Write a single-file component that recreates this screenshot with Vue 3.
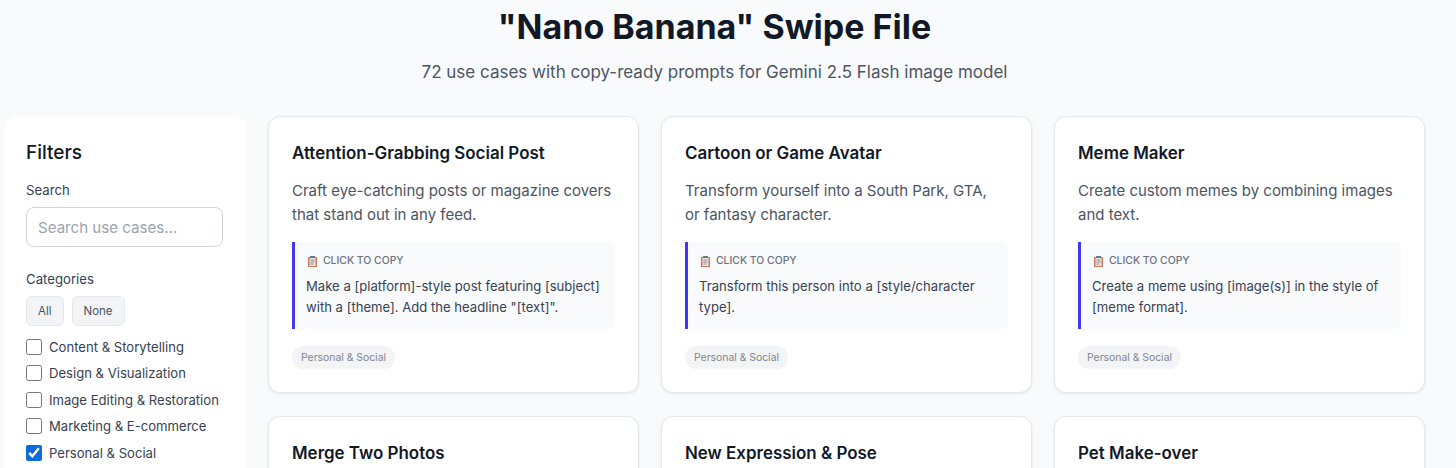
<template>
  <div class="page">
    <header class="head">
      <h1>"Nano Banana" Swipe File</h1>
      <p>72 use cases with copy-ready prompts for Gemini 2.5 Flash image model</p>
    </header>
    <div class="layout">
      <aside class="filters">
        <h2>Filters</h2>
        <label class="label" for="q">Search</label>
        <input id="q" class="search" type="text" placeholder="Search use cases..." />
        <div class="label cat-label">Categories</div>
        <div class="btns">
          <button class="mini">All</button>
          <button class="mini">None</button>
        </div>
        <label v-for="c in categories" :key="c.name" class="check">
          <input type="checkbox" :checked="c.on" />
          <span>{{ c.name }}</span>
        </label>
      </aside>
      <main class="grid">
        <article v-for="u in useCases" :key="u.title" class="card">
          <h3>{{ u.title }}</h3>
          <template v-if="u.desc">
            <p class="desc">{{ u.desc }}</p>
            <div class="prompt">
              <div class="copy">
                <svg class="clip" viewBox="0 0 9 11" width="9" height="11">
                  <rect x="0" y="1" width="9" height="10" rx="0.5" fill="#c97a58" />
                  <rect x="1.5" y="2" width="6" height="8" fill="#ede6e2" />
                  <rect x="2" y="0" width="5" height="2" fill="#6f7482" />
                  <path d="M2.5 4h4M2.5 6h4M2.5 8h3" stroke="#8a8c9a" stroke-width="1" />
                </svg>
                <span>CLICK TO COPY</span>
              </div>
              <div class="prompt-text">{{ u.prompt }}</div>
            </div>
            <span class="tag">Personal &amp; Social</span>
          </template>
        </article>
      </main>
    </div>
  </div>
</template>

<script setup>
const categories = [
  { name: 'Content & Storytelling', on: false },
  { name: 'Design & Visualization', on: false },
  { name: 'Image Editing & Restoration', on: false },
  { name: 'Marketing & E-commerce', on: false },
  { name: 'Personal & Social', on: true }
]

const useCases = [
  {
    title: 'Attention-Grabbing Social Post',
    desc: 'Craft eye-catching posts or magazine covers that stand out in any feed.',
    prompt: 'Make a [platform]-style post featuring [subject] with a [theme]. Add the headline "[text]".'
  },
  {
    title: 'Cartoon or Game Avatar',
    desc: 'Transform yourself into a South Park, GTA, or fantasy character.',
    prompt: 'Transform this person into a [style/character type].'
  },
  {
    title: 'Meme Maker',
    desc: 'Create custom memes by combining images and text.',
    prompt: 'Create a meme using [image(s)] in the style of [meme format].'
  },
  { title: 'Merge Two Photos' },
  { title: 'New Expression & Pose' },
  { title: 'Pet Make-over' }
]
</script>

<style>
html, body { overflow: hidden; background: #f9fafb; }
</style>

<style scoped>
.page {
  font-family: Inter, "Liberation Sans", sans-serif;
  background: #f9fafb;
  height: 468px;
  overflow: hidden;
}
.head { text-align: center; width: 1429px; padding-top: 7px; height: 116px; box-sizing: border-box; }
.head h1 {
  margin: 0;
  font-size: 34px;
  line-height: 40px;
  font-weight: 700;
  color: #111827;
}
.head p {
  margin: 15px 0 0;
  font-size: 17px;
  line-height: 20px;
  color: #4b5563;
}
.layout { display: flex; gap: 22px; padding: 0 31px 0 4px; align-items: flex-start; }
.filters {
  width: 242px;
  flex: none;
  box-sizing: border-box;
  background: #fff;
  border-radius: 12px;
  padding: 24px 22px;
  height: 500px;
  box-shadow: 0 1px 2px rgba(0, 0, 0, 0.02);
}
.filters h2 { margin: 0; font-size: 19px; line-height: 26px; font-weight: 500; color: #111827; }
.label { display: block; font-size: 13.2px; line-height: 20px; font-weight: 400; color: #374151; margin-top: 14px; }
.search {
  display: block;
  box-sizing: border-box;
  width: 197px;
  height: 40px;
  margin-top: 7px;
  padding: 0 11px;
  border: 1px solid #d1d5db;
  border-radius: 8px;
  font: 15.1px Inter, sans-serif;
  outline: none;
}
.search::placeholder { color: #9ca3af; }
.cat-label { margin-top: 22px; }
.btns { display: flex; gap: 8px; margin-top: 7px; margin-bottom: 7.9px; }
.mini {
  height: 30px;
  padding: 0 11px;
  border: 1px solid #e5e7eb;
  border-radius: 6px;
  background: #f3f4f6;
  font: 11.5px Inter, sans-serif;
  color: #4b5563;
}
.check {
  display: flex;
  align-items: center;
  gap: 7px;
  height: 26.4px;
  font-size: 13.1px;
  color: #374151;
}
.check input { width: 16px; height: 16px; margin: 0; accent-color: #0b6bdc; }
.grid { display: grid; grid-template-columns: repeat(3, 371px); gap: 23px 22px; }
.card {
  box-sizing: border-box;
  height: 277px;
  background: #fff;
  border: 1px solid #e5e7eb;
  border-radius: 12px;
  padding: 24px 23px 23px;
  box-shadow: 0 1px 3px rgba(0, 0, 0, 0.08);
}
.card h3 { margin: 0; font-size: 16.95px; line-height: 24px; font-weight: 600; color: #111827; }
.desc { margin: 14px 3px 0 0; font-size: 15px; line-height: 24px; color: #4b5563; }
.prompt {
  margin-top: 15px;
  border-left: 3px solid #4338f0;
  background: #f9fafb;
  border-radius: 0 6px 6px 0;
  padding: 12px 11px;
  height: 87px;
  box-sizing: border-box;
}
.copy { display: flex; align-items: center; gap: 6px; padding-left: 2px; font-size: 10.4px; line-height: 14px; font-weight: 500; color: #6b7280; }
.clip { flex: none; }
.prompt-text { margin-top: 8px; font-size: 13.1px; line-height: 21px; color: #374151; }
.tag {
  display: inline-block;
  margin-top: 17px;
  padding: 0 9px;
  height: 23px;
  line-height: 23px;
  border-radius: 12px;
  background: #f3f4f6;
  color: #7f8590;
  font-size: 10.4px;
}
</style>
